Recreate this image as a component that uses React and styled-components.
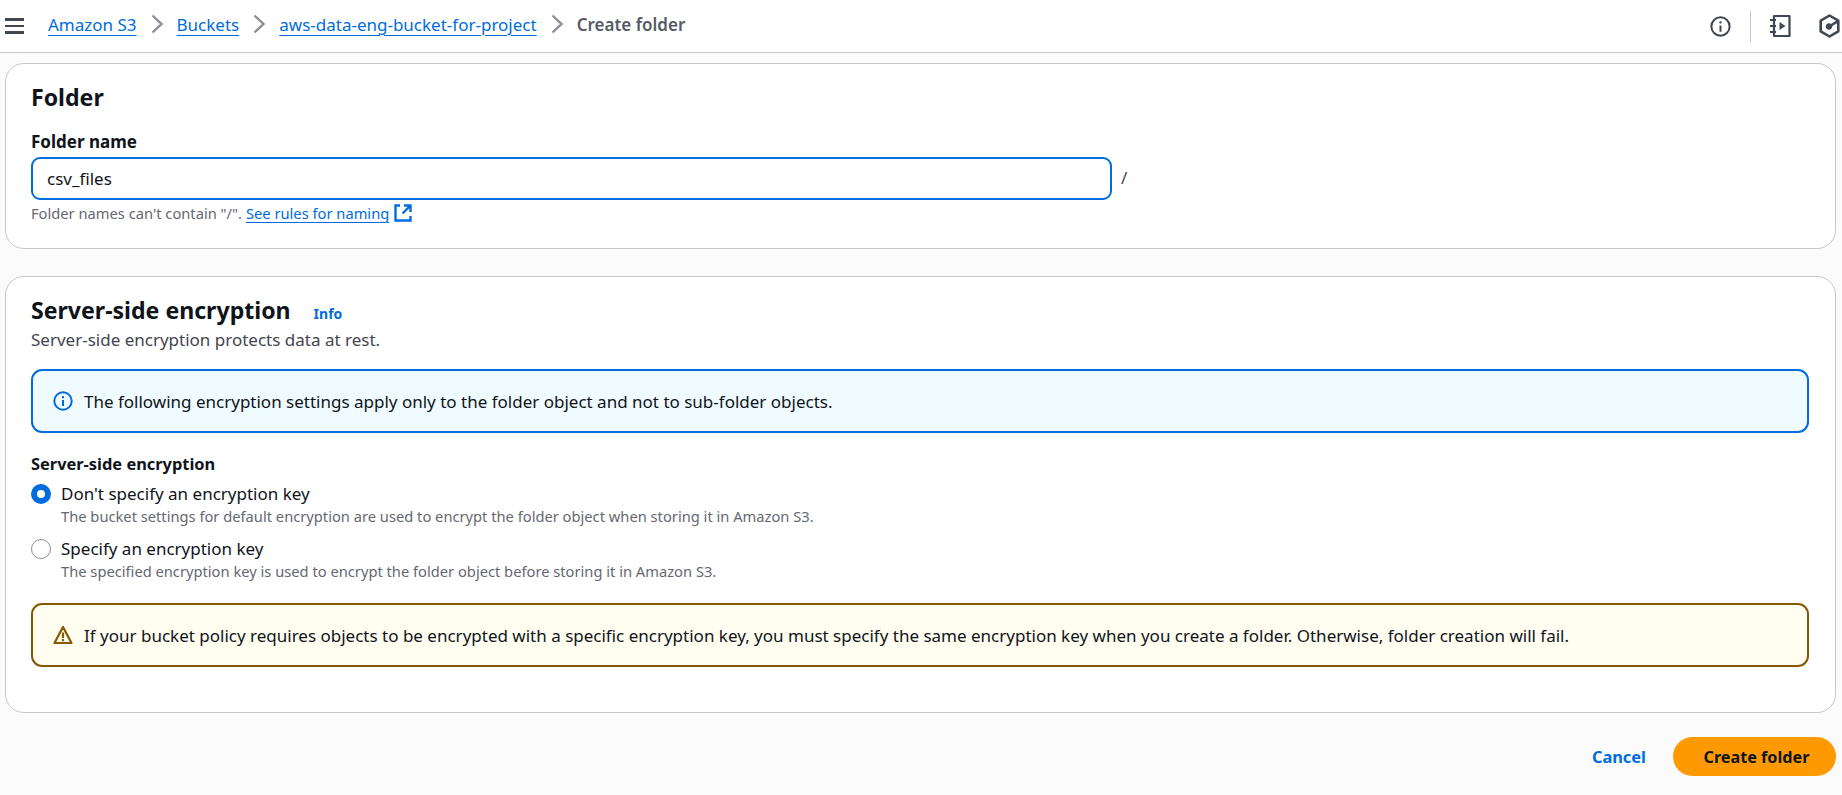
import React from "react"
import styled, { createGlobalStyle } from "styled-components"

const Global = createGlobalStyle`
  html, body { margin: 0; padding: 0; background: #fbfbfb; }
  body {
    font-family: "Noto Sans", "Liberation Sans", sans-serif;
    color: #0f141a;
    font-size: 17px;
  }
`

const Page = styled.div`
  width: 1842px;
  height: 795px;
  overflow: hidden;
`

const Topbar = styled.header`
  height: 52px;
  background: #fff;
  border-bottom: 1px solid #c6c6cd;
  display: flex;
  align-items: center;
  padding: 0 2px 0 5px;
`

const Burger = styled.div`
  width: 19px;
  display: flex;
  flex-direction: column;
  gap: 4px;
  margin-right: 24px;
  span { display: block; height: 2.5px; background: #424650; }
`

const Crumbs = styled.nav`
  display: flex;
  align-items: center;
  flex: 1;
  padding-bottom: 4px;
`

const Crumb = styled.a`
  color: #006ce0;
  text-decoration: underline;
  text-underline-offset: 4px;
  text-decoration-thickness: 1px;
  white-space: nowrap;
`

const Current = styled.span`
  color: #545b64;
  font-weight: 600;
  white-space: nowrap;
`

const Sep = styled.svg`
  width: 14px;
  height: 20px;
  margin: 0 13px;
  fill: none;
  stroke: #8c8c94;
  stroke-width: 2.4;
`

const Tools = styled.div`
  display: flex;
  align-items: center;
  gap: 28px;
  svg { display: block; }
`

const ToolGroup = styled.div`
  display: flex;
  align-items: center;
`

const Divider = styled.div`
  width: 1px;
  height: 31px;
  background: #c6c6cd;
  margin: 0 19px 0 19px;
`

const Main = styled.main`
  padding: 10px 6px 0 5px;
  display: flex;
  flex-direction: column;
  gap: 27px;
`

const Panel = styled.section`
  background: #fff;
  border: 1px solid #c6c6cd;
  border-radius: 19px;
  padding: ${(p) => p.$pad};
  height: ${(p) => p.$height}px;
  box-sizing: border-box;
`

const Title = styled.h2`
  margin: 0;
  font-size: 23.1px;
  line-height: 30px;
  font-weight: 700;
  display: flex;
  align-items: baseline;
`

const InfoLink = styled.a`
  color: #006ce0;
  font-size: 14px;
  font-weight: 700;
  margin-left: 23px;
`

const Label = styled.div`
  font-size: ${(p) => p.$size || 16.4}px;
  line-height: 22px;
  font-weight: 700;
  margin-top: ${(p) => p.$top}px;
`

const FieldRow = styled.div`
  display: flex;
  align-items: center;
  margin-top: 4px;
`

const Input = styled.div`
  width: 1081px;
  height: 43px;
  box-sizing: border-box;
  border: 2px solid #006ce0;
  border-radius: 9px;
  padding: 0 14px;
  display: flex;
  align-items: center;
`

const Slash = styled.span`
  margin-left: 9px;
  color: #424650;
  margin-top: -2px;
`

const Hint = styled.div`
  font-size: 14.7px;
  line-height: 20px;
  color: #656871;
  margin-top: 3px;
  display: flex;
  align-items: center;
`

const HintLink = styled.a`
  color: #006ce0;
  text-decoration: underline;
  text-underline-offset: 3px;
  margin-left: 4px;
`

const Sub = styled.div`
  color: #424650;
  line-height: 22px;
`

const Alert = styled.div`
  border: 2px solid ${(p) => p.$border};
  background: ${(p) => p.$bg};
  border-radius: 11px;
  height: 64px;
  box-sizing: border-box;
  padding: 0 20px;
  display: flex;
  align-items: center;
  gap: 11px;
  margin-top: ${(p) => p.$top}px;
  svg { flex: none; }
`

const Options = styled.div`
  display: flex;
  flex-direction: column;
  gap: 11px;
  margin-top: 7px;
`

const Option = styled.div`
  display: grid;
  grid-template-columns: 20px 1fr;
  column-gap: 10px;
  align-items: center;
`

const Radio = styled.div`
  width: 20px;
  height: 20px;
  box-sizing: border-box;
  border-radius: 50%;
  border: ${(p) => (p.$on ? "6px solid #006ce0" : "1.5px solid #8c8c94")};
  background: #fff;
`

const OptName = styled.div`
  line-height: 24px;
`

const OptDesc = styled.div`
  grid-column: 2;
  font-size: 14.7px;
  line-height: 20px;
  color: #656871;
`

const Footer = styled.footer`
  display: flex;
  justify-content: flex-end;
  align-items: center;
  padding: 24px 6px 0 0;
  gap: 27px;
`

const Cancel = styled.a`
  color: #006ce0;
  font-weight: 700;
  font-size: 16.4px;
`

const Primary = styled.button`
  width: 163px;
  height: 39px;
  border: 0;
  border-radius: 20px;
  padding: 0 0 0 4px;
  background: #ff9900;
  color: #0f141a;
  font: 700 16.2px "Noto Sans", sans-serif;
`

const External = styled.svg`
  width: 18px;
  height: 18px;
  margin-left: 5px;
  fill: none;
  stroke: #006ce0;
  stroke-width: 2.4;
`

const Chevron = () => (
  <Sep viewBox="0 0 14 20"><path d="M2.500 1.500l9 8.500-9 8.500" /></Sep>
)

const InfoIcon = ({ size, color, w }) => (
  <svg width={size} height={size} viewBox="0 0 20 20" fill="none" stroke={color} strokeWidth={w}>
    <circle cx="10" cy="10" r="8.700" />
    <path d="M10 9v6M10 5v2.200" />
  </svg>
)

const NotebookIcon = () => (
  <svg width="21" height="24" viewBox="0 0 21 24" fill="none" stroke="#424650" strokeWidth="2.200">
    <path d="M4 2h15.500v20H4z" strokeLinejoin="round" />
    <path d="M0 6h6M0 12h6M0 18h6" />
    <path d="M9.500 8l6 4-6 4z" fill="#424650" stroke="none" />
  </svg>
)

const HexIcon = () => (
  <svg width="21" height="24" viewBox="0 0 21 24" fill="none" stroke="#424650" strokeWidth="2.600" strokeLinejoin="round">
    <path d="M10.500 1.500l8.800 5.200v10.600l-8.800 5.200-8.800-5.200V6.700z" />
    <circle cx="10" cy="12.500" r="2.800" fill="#424650" strokeWidth="1" />
    <path d="M11 12l8-4.800" />
  </svg>
)

const ExternalIcon = () => (
  <External viewBox="0 0 18 18">
    <path d="M6 1.500H1.500v15h15V12M8.500 9.500L16 2M10 1.500h6.500V8" />
  </External>
)

const WarnIcon = () => (
  <svg width="20" height="20" viewBox="0 0 20 20" fill="none" stroke="#855900" strokeWidth="2.200">
    <path d="M10 2L1.500 18h17z" strokeLinejoin="round" />
    <path d="M10 7.500v5.500M10 14v2.200" />
  </svg>
)

export default function App() {
  return (
    <Page>
      <Global />
      <Topbar>
        <Burger><span /><span /><span /></Burger>
        <Crumbs>
          <Crumb>Amazon S3</Crumb>
          <Chevron />
          <Crumb>Buckets</Crumb>
          <Chevron />
          <Crumb>aws-data-eng-bucket-for-project</Crumb>
          <Chevron />
          <Current>Create folder</Current>
        </Crumbs>
        <Tools>
          <ToolGroup>
            <InfoIcon size={21} color="#424650" w={1.9} />
            <Divider />
            <NotebookIcon />
          </ToolGroup>
          <HexIcon />
        </Tools>
      </Topbar>
      <Main>
        <Panel $pad="18px 26px 0 25px" $height={186}>
          <Title>Folder</Title>
          <Label $top={19} $size={17}>Folder name</Label>
          <FieldRow>
            <Input>csv_files</Input>
            <Slash>/</Slash>
          </FieldRow>
          <Hint>
            Folder names can't contain "/".
            <HintLink>See rules for naming</HintLink>
            <ExternalIcon />
          </Hint>
        </Panel>
        <Panel $pad="18px 26px 0 25px" $height={437}>
          <Title>
            Server-side encryption
            <InfoLink>Info</InfoLink>
          </Title>
          <Sub>Server-side encryption protects data at rest.</Sub>
          <Alert $border="#006ce0" $bg="#f0fbff" $top={18}>
            <InfoIcon size={20} color="#006ce0" w={2} />
            The following encryption settings apply only to the folder object and not to sub-folder objects.
          </Alert>
          <Label $top={20}>Server-side encryption</Label>
          <Options>
            <Option>
              <Radio $on />
              <OptName>Don't specify an encryption key</OptName>
              <OptDesc>The bucket settings for default encryption are used to encrypt the folder object when storing it in Amazon S3.</OptDesc>
            </Option>
            <Option>
              <Radio />
              <OptName>Specify an encryption key</OptName>
              <OptDesc>The specified encryption key is used to encrypt the folder object before storing it in Amazon S3.</OptDesc>
            </Option>
          </Options>
          <Alert $border="#855900" $bg="#fffef0" $top={22}>
            <WarnIcon />
            If your bucket policy requires objects to be encrypted with a specific encryption key, you must specify the same encryption key when you create a folder. Otherwise, folder creation will fail.
          </Alert>
        </Panel>
      </Main>
      <Footer>
        <Cancel>Cancel</Cancel>
        <Primary>Create folder</Primary>
      </Footer>
    </Page>
  )
}
